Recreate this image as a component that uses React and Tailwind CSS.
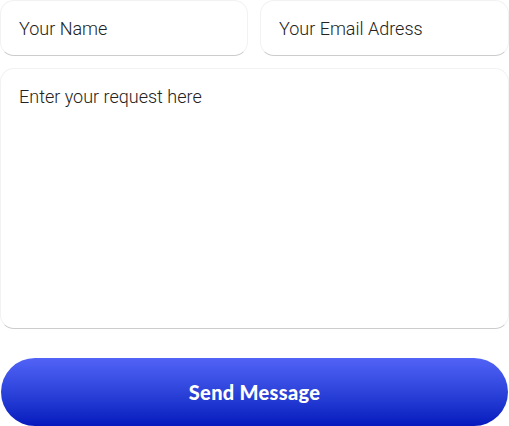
import React from "react";

export default function App() {
  const field =
    "w-full bg-white border border-[#f2f2f2] border-b-[#cccccc] rounded-[14px] px-[18px] text-[18px] font-light text-[#222] placeholder:text-[#222] outline-none";
  return (
    <div className="w-[509px] h-[426px] bg-white overflow-hidden" style={{ fontFamily: "Roboto, 'Liberation Sans', sans-serif" }}>
      <div className="grid grid-cols-[248px_249px] gap-x-3">
        <input className={`${field} h-14`} placeholder="Your Name" />
        <input className={`${field} h-14`} placeholder="Your Email Adress" />
      </div>
      <textarea
        className={`${field} mt-3 h-[261px] pt-[14px] resize-none block`}
        placeholder="Enter your request here"
      />
      <button
        className="mt-[29px] ml-px w-[507px] h-[68px] rounded-full bg-gradient-to-b from-[#5263f7] to-[#0618bd] text-white text-[20px] font-black tracking-[0.3px]"
        style={{ fontFamily: "Lato, 'Open Sans', sans-serif" }}
      >
        Send Message
      </button>
    </div>
  );
}
